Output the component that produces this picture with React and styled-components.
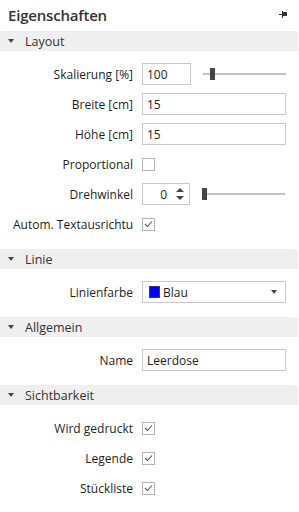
import React from "react";
import styled, { createGlobalStyle } from "styled-components";

const GlobalStyle = createGlobalStyle`
  html, body {
    margin: 0;
    padding: 0;
    background: #ffffff;
  }
  body {
    font-family: "Open Sans", "Noto Sans", "Liberation Sans", sans-serif;
    color: #1e1e1e;
  }
`;

const Panel = styled.div`
  width: 299px;
  height: 512px;
  background: #ffffff;
  overflow: hidden;
`;

const TitleBar = styled.div`
  height: 31px;
  display: flex;
  align-items: center;
  justify-content: space-between;
  padding: 0 11px 2px 8px;
  box-sizing: border-box;
`;

const Title = styled.h1`
  margin: 0;
  font-size: 15px;
  font-weight: 600;
  color: #333333;
  letter-spacing: -0.2px;
`;

const SectionHeader = styled.div`
  width: 298px;
  height: 20px;
  display: flex;
  align-items: center;
  gap: 11px;
  padding-left: 8px;
  box-sizing: border-box;
  background: #efefef;
  border-radius: 0 4px 0 0;
  font-size: 12.5px;
  color: #333333;
`;

const Caret = styled.span`
  width: 0;
  height: 0;
  border-left: 3.5px solid transparent;
  border-right: 3.5px solid transparent;
  border-top: 4px solid #444444;
`;

const SectionBody = styled.div`
  padding: 8px 0 10px 13px;
`;

const Row = styled.div`
  height: 30px;
  display: grid;
  grid-template-columns: 120px 1fr;
  column-gap: 9px;
  align-items: center;
  padding-right: 13px;
`;

const Label = styled.label`
  font-size: 12px;
  text-align: right;
  white-space: nowrap;
  overflow: hidden;
  color: #1e1e1e;
`;

const Controls = styled.div`
  display: flex;
  align-items: center;
  gap: 12px;
`;

const TextBox = styled.div`
  box-sizing: border-box;
  width: ${(p) => p.$width || "144px"};
  height: 22px;
  border: 1px solid #c9c9c9;
  display: flex;
  align-items: center;
  padding: 0 4px;
  font-size: 12px;
  color: #222222;
`;

const SpinBox = styled(TextBox)`
  justify-content: flex-end;
  gap: 9px;
  padding-right: 5px;
`;

const SpinArrows = styled.div`
  display: flex;
  flex-direction: column;
  gap: 4px;
`;

const Arrow = styled.span`
  width: 0;
  height: 0;
  border-left: 4px solid transparent;
  border-right: 4px solid transparent;
  ${(p) =>
    p.$up ? "border-bottom: 4px solid #444;" : "border-top: 4px solid #444;"}
`;

const SliderTrack = styled.div`
  position: relative;
  width: 83px;
  height: 2px;
  background: #c4c4c4;
`;

const SliderThumb = styled.div`
  position: absolute;
  top: -5px;
  width: 5px;
  height: 12px;
  background: #444444;
`;

const CheckBox = styled.div`
  box-sizing: border-box;
  width: 13px;
  height: 13px;
  border: 1px solid #b4b4b4;
  display: flex;
  align-items: center;
  justify-content: center;
`;

const Select = styled(TextBox)`
  gap: 3px;
  padding-left: 6px;
  padding-right: 8px;
`;

const Swatch = styled.span`
  width: 11px;
  height: 12px;
  background: ${(p) => p.$color};
  border: 1px solid #333399;
  box-sizing: border-box;
`;

const SelectText = styled.span`
  flex: 1;
`;

const DropArrow = styled.span`
  width: 0;
  height: 0;
  border-left: 3.5px solid transparent;
  border-right: 3.5px solid transparent;
  border-top: 4px solid #444;
`;

const PinIcon = () => (
  <svg width="9" height="8" viewBox="0 0 9 8">
    <rect x="0" y="3" width="4" height="1" fill="#333" />
    <rect x="3" y="0" width="1" height="7" fill="#333" />
    <rect x="4" y="1" width="4" height="4" fill="#333" />
  </svg>
);

const Check = ({ checked }) => (
  <CheckBox>
    {checked && (
      <svg width="9" height="8" viewBox="0 0 9 8">
        <path d="M1 4 L3.5 6.5 L8 1.5" fill="none" stroke="#555" strokeWidth="1.1" />
      </svg>
    )}
  </CheckBox>
);

const Slider = ({ pos }) => (
  <SliderTrack>
    <SliderThumb style={{ left: pos }} />
  </SliderTrack>
);

const Section = ({ title, children }) => (
  <>
    <SectionHeader>
      <Caret />
      <span>{title}</span>
    </SectionHeader>
    <SectionBody>{children}</SectionBody>
  </>
);

const Field = ({ label, children }) => (
  <Row>
    <Label>{label}</Label>
    <Controls>{children}</Controls>
  </Row>
);

export default function App() {
  return (
    <Panel>
      <GlobalStyle />
      <TitleBar>
        <Title>Eigenschaften</Title>
        <PinIcon />
      </TitleBar>

      <Section title="Layout">
        <Field label="Skalierung [%]">
          <TextBox $width="49px">100</TextBox>
          <Slider pos={7} />
        </Field>
        <Field label="Breite [cm]">
          <TextBox>15</TextBox>
        </Field>
        <Field label="Höhe [cm]">
          <TextBox>15</TextBox>
        </Field>
        <Field label="Proportional">
          <Check />
        </Field>
        <Field label="Drehwinkel">
          <SpinBox $width="48px">
            <span>0</span>
            <SpinArrows>
              <Arrow $up />
              <Arrow />
            </SpinArrows>
          </SpinBox>
          <Slider pos={0} />
        </Field>
        <Field label="Autom. Textausrichtung">
          <Check checked />
        </Field>
      </Section>

      <Section title="Linie">
        <Field label="Linienfarbe">
          <Select>
            <Swatch $color="#0000ff" />
            <SelectText>Blau</SelectText>
            <DropArrow />
          </Select>
        </Field>
      </Section>

      <Section title="Allgemein">
        <Field label="Name">
          <TextBox>Leerdose</TextBox>
        </Field>
      </Section>

      <Section title="Sichtbarkeit">
        <Field label="Wird gedruckt">
          <Check checked />
        </Field>
        <Field label="Legende">
          <Check checked />
        </Field>
        <Field label="Stückliste">
          <Check checked />
        </Field>
      </Section>
    </Panel>
  );
}
